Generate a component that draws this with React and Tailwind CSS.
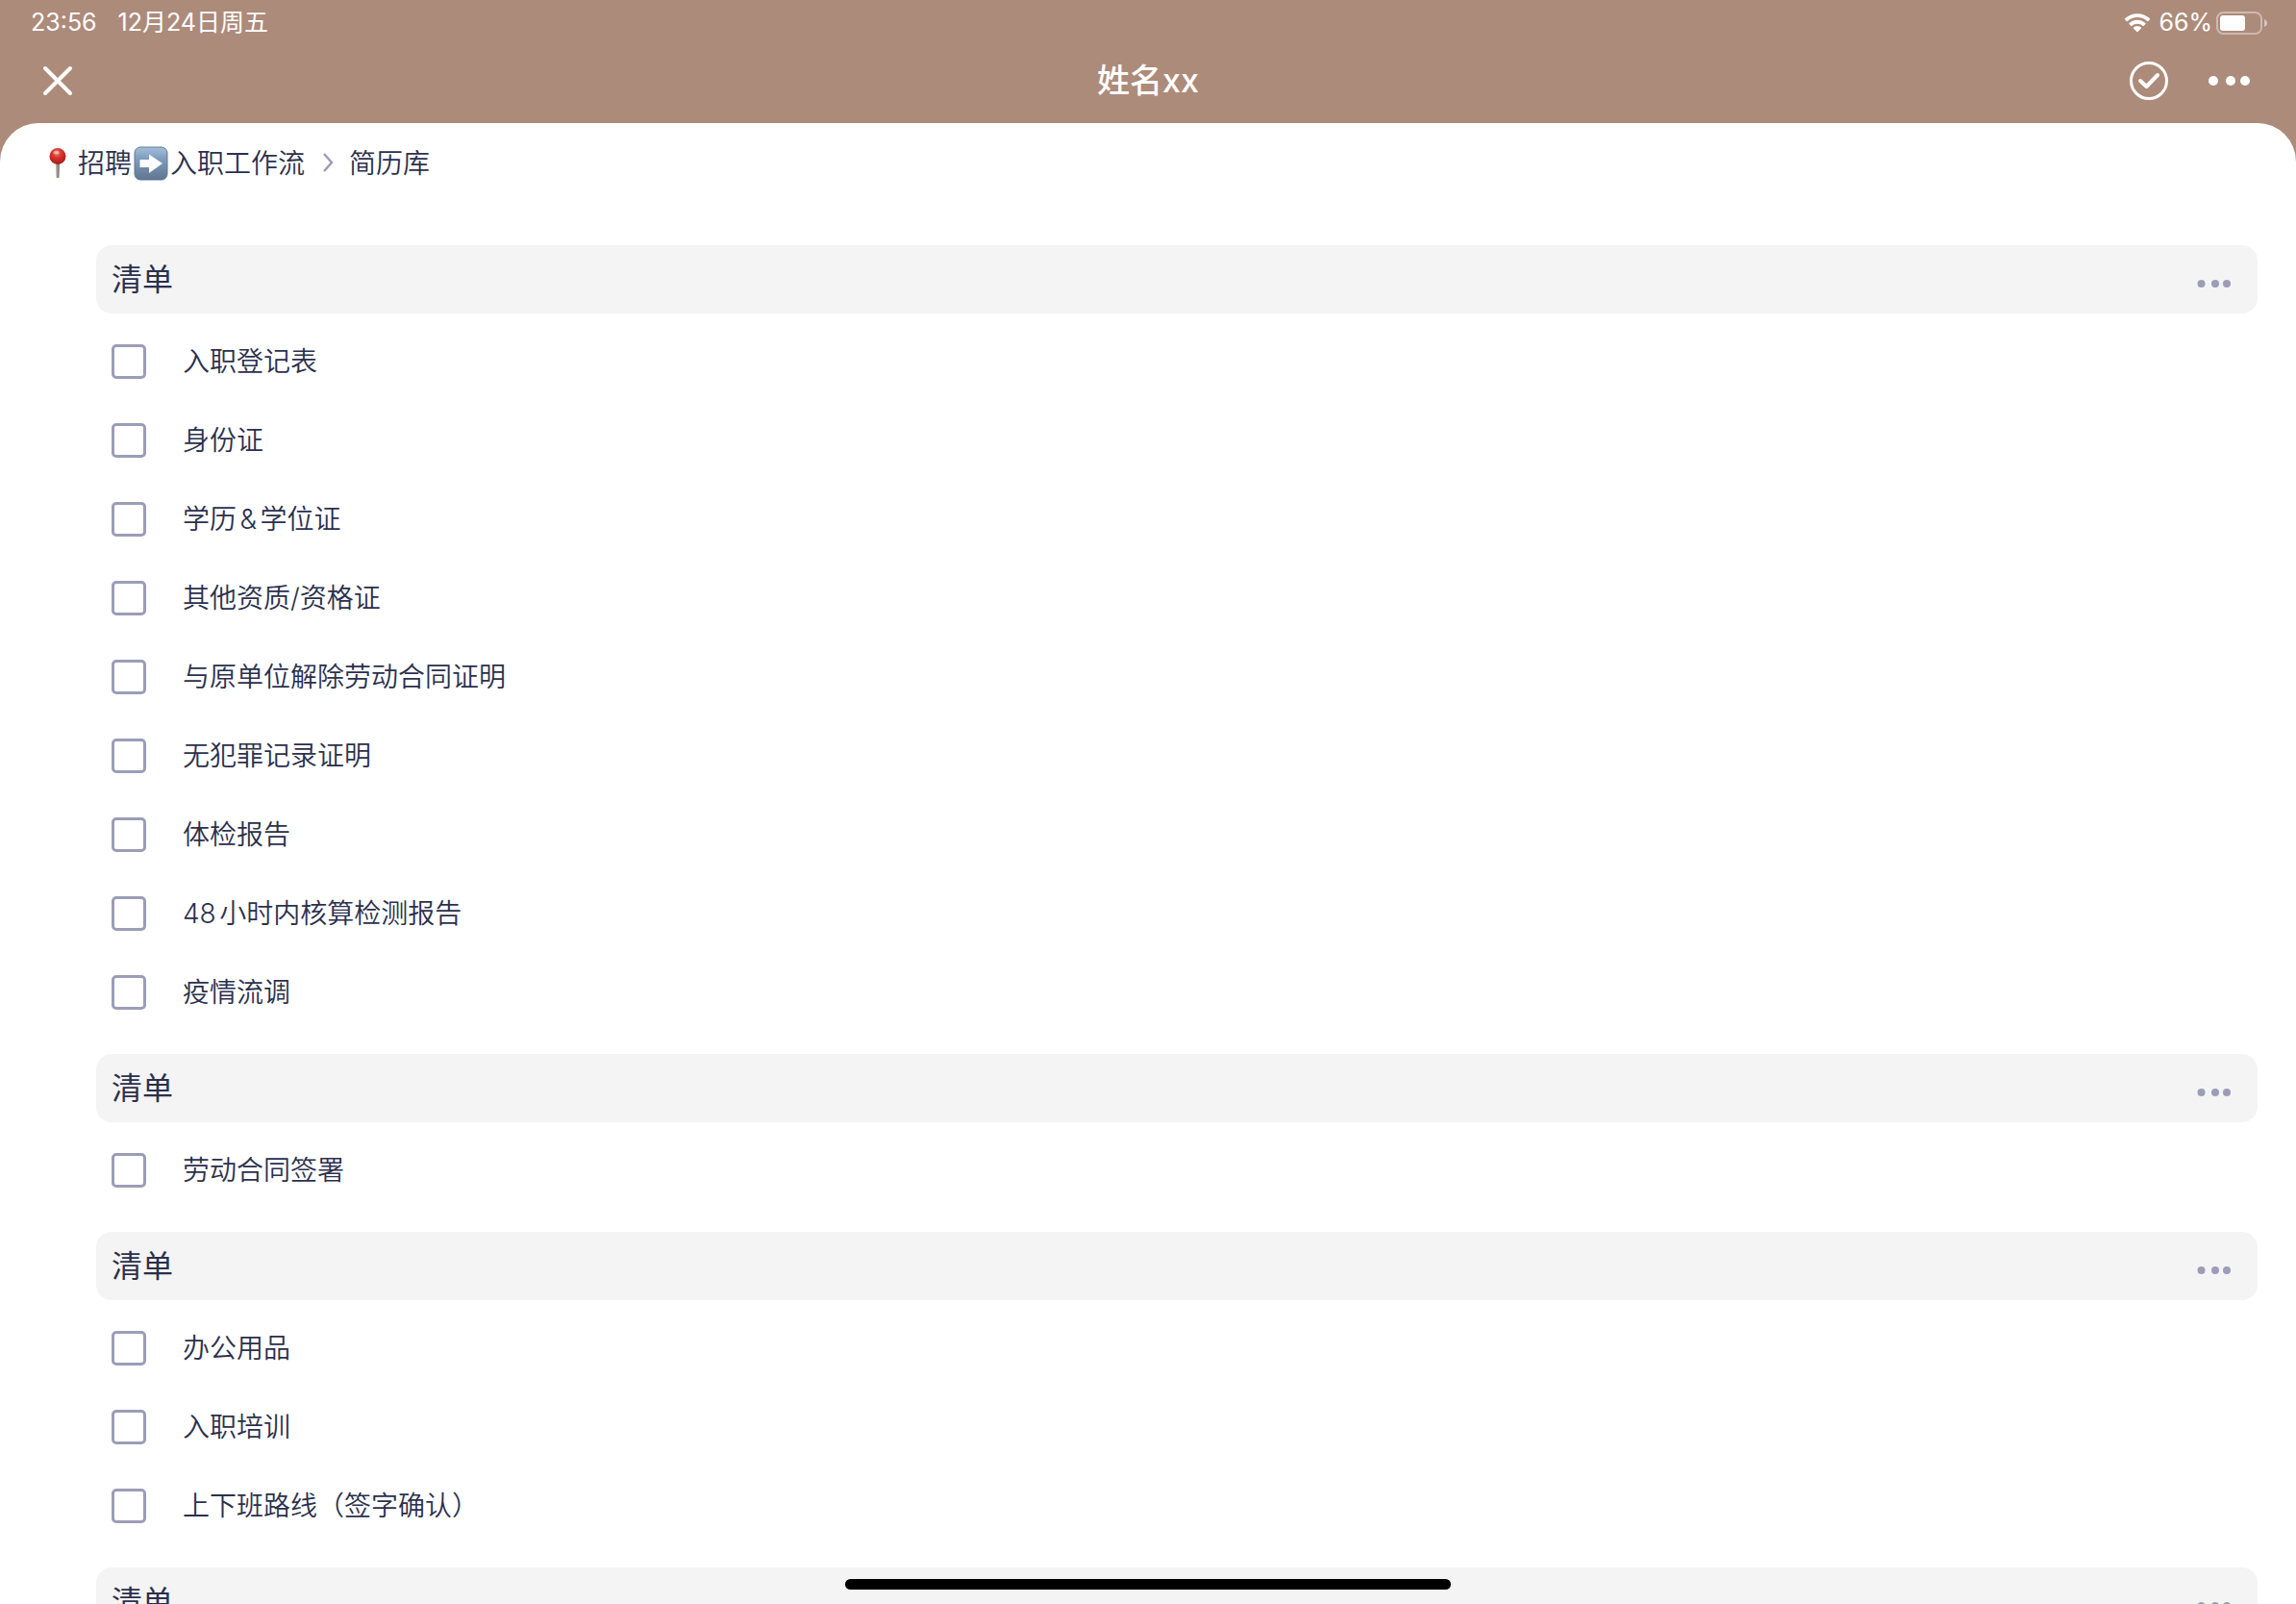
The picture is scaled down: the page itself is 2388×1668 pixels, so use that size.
import React from "react";

const sections = [
  {
    title: "清单",
    items: [
      "入职登记表",
      "身份证",
      "学历&学位证",
      "其他资质/资格证",
      "与原单位解除劳动合同证明",
      "无犯罪记录证明",
      "体检报告",
      "48小时内核算检测报告",
      "疫情流调",
    ],
  },
  { title: "清单", items: ["劳动合同签署"] },
  { title: "清单", items: ["办公用品", "入职培训", "上下班路线（签字确认）"] },
  { title: "清单", items: [] },
];

function WifiIcon() {
  return (
    <svg width="28" height="20" viewBox="0 0 28 20" fill="currentColor">
      <path d="M14 4.1c3.9 0 7.500 1.500 10.300 4.100.2.200.6.200.8 0l2-2.100c.2-.2.2-.6 0-.8C19.800-1.600 8.200-1.600.900 5.300c-.2.200-.2.600 0 .8l2 2.100c.2.200.6.200.8 0C6.500 5.600 10.200 4.100 14 4.100z" />
      <path d="M14 10.800c2.100 0 4.100.8 5.700 2.200.2.200.6.200.8 0l2-2.100c.2-.2.2-.6 0-.8-4.800-4.500-12.200-4.500-17 0-.2.200-.2.600 0 .8l2 2.100c.2.200.6.200.8 0 1.600-1.400 3.600-2.200 5.700-2.200z" />
      <path d="M18 15.400c.2-.2.2-.6 0-.8-2.300-1.900-5.700-1.900-8 0-.2.200-.2.600 0 .8l3.500 3.600c.3.300.7.300 1 0z" />
    </svg>
  );
}

function BatteryIcon() {
  return (
    <svg width="54" height="24" viewBox="0 0 54 24">
      <rect x="1" y="1" width="46" height="22" rx="6.500" fill="none" stroke="#fff" strokeOpacity="0.400" strokeWidth="2" />
      <rect x="4" y="4" width="26" height="16" rx="3" fill="#fff" />
      <path d="M50 8c1.800.7 3 2.200 3 4s-1.200 3.300-3 4z" fill="#fff" fillOpacity="0.500" />
    </svg>
  );
}

function PinIcon() {
  return (
    <svg width="18" height="32" viewBox="0 0 18 32">
      <defs>
        <radialGradient id="pinHead" cx="0.450" cy="0.300" r="0.700">
          <stop offset="0" stopColor="#f0887c" />
          <stop offset="0.400" stopColor="#d8352d" />
          <stop offset="1" stopColor="#a81a1a" />
        </radialGradient>
        <linearGradient id="pinStem" x1="0" x2="1" y1="0" y2="0">
          <stop offset="0" stopColor="#b5aca5" />
          <stop offset="1" stopColor="#77706b" />
        </linearGradient>
      </defs>
      <path d="M7 14h4l-.5 16.500q-1.500 1.500-3 0z" fill="url(#pinStem)" />
      <circle cx="9" cy="8.500" r="8.500" fill="url(#pinHead)" />
      <ellipse cx="7.500" cy="4.500" rx="3" ry="1.800" fill="#fff" fillOpacity="0.450" />
    </svg>
  );
}

function ArrowIcon() {
  return (
    <svg width="36" height="36" viewBox="0 0 36 36">
      <defs>
        <linearGradient id="arrowBg" x1="0" x2="0" y1="0" y2="1">
          <stop offset="0" stopColor="#a3bfdb" />
          <stop offset="0.350" stopColor="#7f9dbf" />
          <stop offset="1" stopColor="#60758e" />
        </linearGradient>
      </defs>
      <rect x="1" y="1" width="34" height="34" rx="6" fill="url(#arrowBg)" stroke="#5d7b99" strokeWidth="1" />
      <path d="M6.500 14H16V8.500L30 18 16 28v-6H6.500z" fill="#fff" />
    </svg>
  );
}

function Section({ title, items, id }) {
  return (
    <section className="pb-[23px]">
      <div className="mb-[9px] flex h-[71px] items-center justify-between rounded-2xl bg-[#f4f4f4] pr-7 pl-4">
        <h2 className="text-[32px] leading-10">{title}</h2>
        <button type="button" aria-label="更多" className="pt-2 text-[#9b9db8]">
          <svg width="36" height="8" viewBox="0 0 36 8" fill="currentColor">
            <circle cx="5.500" cy="4" r="4" />
            <circle cx="20" cy="4" r="4" />
            <circle cx="32" cy="4" r="4" />
          </svg>
        </button>
      </div>
      <ul>
        {items.map((item, i) => (
          <li key={item} className="flex h-[82px] items-center gap-[38px] pl-4">
            <input
              type="checkbox"
              id={`${id}-${i}`}
              className="size-9 shrink-0 appearance-none rounded-[5px] border-3 border-[#9b9db8] bg-white checked:bg-[#9b9db8]"
            />
            <label htmlFor={`${id}-${i}`} className="text-[28px] leading-10 font-[350] [text-autospace:normal]">
              {item}
            </label>
          </li>
        ))}
      </ul>
    </section>
  );
}

export default function App() {
  return (
    <div
      lang="zh-CN"
      className="relative flex h-screen flex-col overflow-hidden bg-[#ad8b7a] font-['Inter','Noto_Sans_CJK_SC',sans-serif] text-[#2b304d]"
    >
      <div className="flex h-12 shrink-0 items-center justify-between pr-[29px] pl-8 text-[25px] text-white">
        <div className="flex gap-[22px]">
          <span>23:56</span>
          <span>12月24日周五</span>
        </div>
        <div className="flex items-center">
          <WifiIcon />
          <span className="mr-1 ml-2">66%</span>
          <BatteryIcon />
        </div>
      </div>

      <header className="grid h-20 shrink-0 grid-cols-3 items-center px-11 pb-2 text-white">
        <button type="button" aria-label="关闭" className="justify-self-start">
          <svg width="32" height="32" viewBox="0 0 32 32" fill="none" stroke="currentColor" strokeWidth="4" strokeLinecap="round">
            <path d="M3 3l26 26M29 3L3 29" />
          </svg>
        </button>
        <h1 className="text-center text-[34px] leading-10 font-medium">姓名xx</h1>
        <div className="flex items-center justify-end gap-[42px]">
          <button type="button" aria-label="完成">
            <svg width="40" height="40" viewBox="0 0 40 40" fill="none" stroke="currentColor" strokeLinecap="round" strokeLinejoin="round">
              <circle cx="20" cy="20" r="18.500" strokeWidth="3" />
              <path d="M11 20l6.500 6L29 14" strokeWidth="4" />
            </svg>
          </button>
          <button type="button" aria-label="更多">
            <svg width="47" height="10" viewBox="0 0 47 10" fill="currentColor">
              <circle cx="5" cy="5" r="5" />
              <circle cx="23" cy="5" r="5" />
              <circle cx="38" cy="5" r="5" />
            </svg>
          </button>
        </div>
      </header>

      <main className="min-h-0 flex-1 overflow-hidden rounded-t-[40px] bg-white">
        <nav className="flex h-[127px] items-start pt-[22px] pl-[51px] text-[28px] leading-10 font-[350]">
          <a href="#board" className="flex items-center">
            <PinIcon />
            <span className="ml-3">招聘</span>
            <span className="ml-0.5">
              <ArrowIcon />
            </span>
            <span className="ml-0.5">入职工作流</span>
          </a>
          <svg className="mr-4 ml-[18px] h-10 w-3" viewBox="0 0 12 40" fill="none" stroke="#9b9db8" strokeWidth="2.500">
            <path d="M2 10l8 9-8 9" />
          </svg>
          <a href="#list">简历库</a>
        </nav>
        <div className="pr-10 pl-[100px]">
          {sections.map((s, i) => (
            <Section key={i} id={`list-${i}`} title={s.title} items={s.items} />
          ))}
        </div>
      </main>

      <div className="absolute bottom-[15px] left-1/2 h-[11px] w-[630px] -translate-x-1/2 rounded-full bg-black" />
    </div>
  );
}
